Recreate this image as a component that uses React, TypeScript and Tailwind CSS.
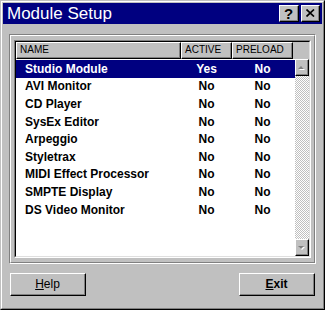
import React from "react";

const rows = [
  { name: "Studio Module", active: "Yes", preload: "No", selected: true },
  { name: "AVI Monitor", active: "No", preload: "No" },
  { name: "CD Player", active: "No", preload: "No" },
  { name: "SysEx Editor", active: "No", preload: "No" },
  { name: "Arpeggio", active: "No", preload: "No" },
  { name: "Styletrax", active: "No", preload: "No" },
  { name: "MIDI Effect Processor", active: "No", preload: "No" },
  { name: "SMPTE Display", active: "No", preload: "No" },
  { name: "DS Video Monitor", active: "No", preload: "No" },
];

function Raised({ className, children }: { className?: string; children?: React.ReactNode }) {
  return (
    <div className={"border-t border-l border-t-white border-l-white border-r border-b border-r-black border-b-black bg-[#c0c0c0] " + (className ?? "")}>
      <div className="w-full h-full border-r border-b border-r-[#808080] border-b-[#808080] flex items-center justify-center">
        {children}
      </div>
    </div>
  );
}

function Arrow({ up }: { up?: boolean }) {
  return (
    <svg width="7" height="5" viewBox="0 0 7 5" className="block">
      {up ? (
        <>
          <polygon points="4,2 7,5 1,5" fill="#ffffff" />
          <polygon points="3,1 6,4 0,4" fill="#808080" />
        </>
      ) : (
        <>
          <polygon points="1,2 7,2 4,5" fill="#ffffff" />
          <polygon points="0,1 6,1 3,4" fill="#808080" />
        </>
      )}
    </svg>
  );
}

export default function App() {
  return (
    <div
      className="w-[325px] h-[310px] bg-[#c0c0c0] border-t border-l border-t-[#c0c0c0] border-l-[#c0c0c0] border-r border-b border-r-black border-b-black"
      style={{ fontFamily: '"Liberation Sans", Arial, sans-serif' }}
    >
      <div className="w-full h-full border-t border-l border-t-white border-l-white border-r border-b border-r-[#808080] border-b-[#808080] p-px flex flex-col">
        {/* title bar */}
        <div className="h-[21px] bg-[#000080] flex items-center pl-[4px] pr-[2px] shrink-0">
          <span className="text-white text-[17px] leading-none flex-1">Module Setup</span>
          <Raised className="w-[20px] h-[17px] mr-[2px]">
            <span className="text-black font-bold text-[15px] leading-none">?</span>
          </Raised>
          <Raised className="w-[19px] h-[17px]">
            <svg width="9" height="8" viewBox="0 0 9 8">
              <path d="M0.5 0.5 L8 7.5 M8 0.5 L0.5 7.5" stroke="black" strokeWidth="1.7" />
            </svg>
          </Raised>
        </div>

        {/* group box */}
        <div className="mt-[10px] mx-[6px] h-[230px] border-t border-l border-t-[#808080] border-l-[#808080] border-r border-b border-r-white border-b-white">
          <div className="w-full h-full border-t border-l border-t-white border-l-white border-r border-b border-r-[#808080] border-b-[#808080] px-[3px] pt-[4px] pb-[4px]">
            {/* list view */}
            <div className="w-full h-full border-t border-l border-t-[#808080] border-l-[#808080] border-r border-b border-r-white border-b-white">
              <div className="w-full h-full border-t border-l border-t-black border-l-black border-r border-b border-r-[#dfdfdf] border-b-[#dfdfdf] flex flex-col bg-[#c0c0c0]">
                {/* header */}
                <div className="flex h-[17px] shrink-0 text-[10px] text-black">
                  <Raised className="w-[165px] h-full">
                    <span className="w-full pl-[3px] leading-none">NAME</span>
                  </Raised>
                  <Raised className="w-[51px] h-full">
                    <span className="w-full pl-[3px] leading-none">ACTIVE</span>
                  </Raised>
                  <Raised className="w-[61px] h-full">
                    <span className="w-full pl-[3px] leading-none">PRELOAD</span>
                  </Raised>
                </div>
                {/* body */}
                <div className="flex flex-1 min-h-0">
                  <div className="flex-1 bg-white pt-[1px]">
                    {rows.map((r) => (
                      <div
                        key={r.name}
                        className={
                          "flex h-[17.6px] items-center text-[12px] font-bold " +
                          (r.selected ? "bg-[#000080] text-white" : "text-black")
                        }
                      >
                        <span className="w-[165px] pl-[9px] leading-none">{r.name}</span>
                        <span className="w-[51px] text-center leading-none">{r.active}</span>
                        <span className="w-[61px] text-center leading-none">{r.preload}</span>
                      </div>
                    ))}
                  </div>
                  {/* scrollbar */}
                  <div className="w-[14px] flex flex-col bg-white bg-[conic-gradient(#ffffff_25%,#c0c0c0_0_50%,#ffffff_0_75%,#c0c0c0_0)] bg-[length:2px_2px]">
                    <Raised className="w-[14px] h-[17px] shrink-0">
                      <Arrow up />
                    </Raised>
                    <div className="flex-1" />
                    <Raised className="w-[14px] h-[17px] shrink-0">
                      <Arrow />
                    </Raised>
                  </div>
                </div>
              </div>
            </div>
          </div>
        </div>

        {/* buttons */}
        <div className="flex justify-between mt-[9px] px-[7px]">
          <Raised className="w-[76px] h-[23px]">
            <span className="text-[12px] text-black">
              <span className="underline">H</span>elp
            </span>
          </Raised>
          <Raised className="w-[76px] h-[23px]">
            <span className="text-[12px] font-bold text-black">
              <span className="underline">E</span>xit
            </span>
          </Raised>
        </div>
      </div>
    </div>
  );
}
